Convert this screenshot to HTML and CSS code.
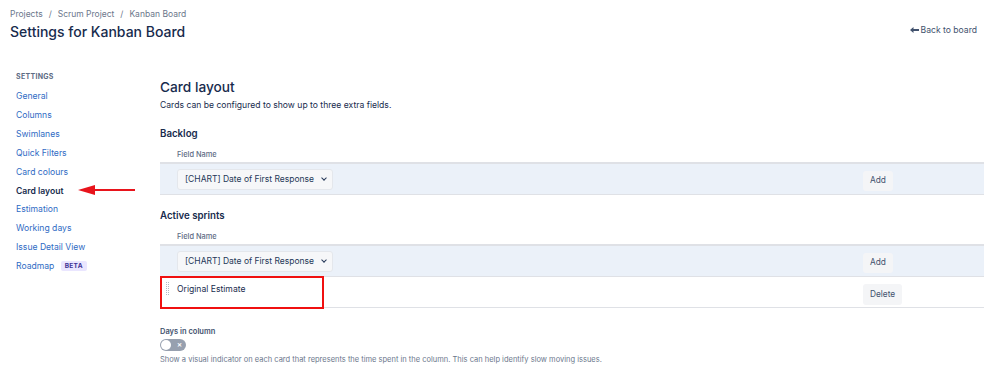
FILE: index.html
```html
<!DOCTYPE html>
<html lang="en">
<head>
    <meta charset="UTF-8">
    <meta name="viewport" content="width=device-width, initial-scale=1.0">
    <title>Settings for Kanban Board</title>
    <link rel="stylesheet" href="styles.css">
</head>
<body>
    <div class="page-header">
        <div>
            <div class="breadcrumbs">
                <a href="#">Projects</a><span class="sep">/</span><a href="#">Scrum Project</a><span class="sep">/</span><a href="#">Kanban Board</a>
            </div>
            <h1>Settings for Kanban Board</h1>
        </div>
        <a class="back-link" href="#">
            <svg class="back-arrow" width="9" height="6" viewBox="0 0 9 6"><path d="M0 3 L3.5 0 L3.5 2 L9 2 L9 4 L3.5 4 L3.5 6 Z" fill="#42526e"/></svg>Back to board
        </a>
    </div>

    <div class="layout">
        <!-- sidebar -->
        <div class="sidebar">
            <div class="sidebar-title">Settings</div>
            <a href="#" class="nav-item">General</a>
            <a href="#" class="nav-item">Columns</a>
            <a href="#" class="nav-item">Swimlanes</a>
            <a href="#" class="nav-item">Quick Filters</a>
            <a href="#" class="nav-item">Card colours</a>
            <a href="#" class="nav-item active">Card layout</a>
            <a href="#" class="nav-item">Estimation</a>
            <a href="#" class="nav-item">Working days</a>
            <a href="#" class="nav-item">Issue Detail View</a>
            <a href="#" class="nav-item">Roadmap <span class="lozenge">Beta</span></a>
            <div class="red-arrow"></div>
        </div>

        <!-- main -->
        <div class="main">
            <h2>Card layout</h2>
            <p class="intro">Cards can be configured to show up to three extra fields.</p>

            <h3>Backlog</h3>
            <div class="field-table">
                <div class="table-head">Field Name</div>
                <div class="table-row add-row">
                    <div class="cell-field">
                        <div class="select">[CHART] Date of First Response<span class="chevron"></span></div>
                    </div>
                    <div class="cell-actions"><button>Add</button></div>
                </div>
            </div>

            <h3 class="sprints-title">Active sprints</h3>
            <div class="field-table">
                <div class="table-head">Field Name</div>
                <div class="table-row add-row">
                    <div class="cell-field">
                        <div class="select">[CHART] Date of First Response<span class="chevron"></span></div>
                    </div>
                    <div class="cell-actions"><button>Add</button></div>
                </div>
                <div class="table-row field-row">
                    <div class="cell-field">
                        <span class="grip"></span>Original Estimate
                    </div>
                    <div class="cell-actions"><button>Delete</button></div>
                    <div class="highlight-box"></div>
                </div>
            </div>

            <div class="days-label">Days in column</div>
            <div class="toggle"><span class="knob"></span><span class="toggle-x">&#x2715;</span></div>
            <p class="help">Show a visual indicator on each card that represents the time spent in the column. This can help identify slow moving issues.</p>
        </div>
    </div>
</body>
</html>
```

FILE: styles.css
```css
body {
    margin: 0;
    font-family: 'Inter', 'Liberation Sans', sans-serif;
    color: #172b4d;
    background: #fff;
}
a {
    text-decoration: none;
}
.page-header {
    display: flex;
    justify-content: space-between;
    align-items: flex-end;
    padding: 6px 22px 0 10px;
}
.breadcrumbs {
    font-size: 8.5px;
    line-height: 16px;
    color: #6b778c;
}
.breadcrumbs a {
    color: #6b778c;
}
.breadcrumbs .sep {
    margin: 0 6px;
}
h1 {
    margin: 0;
    font-size: 14px;
    line-height: 20px;
    font-weight: 500;
}
.back-link {
    display: flex;
    align-items: center;
    font-size: 8.6px;
    line-height: 16px;
    color: #42526e;
    margin-bottom: 4px;
}
.back-arrow {
    margin-right: 2px;
}
.layout {
    display: flex;
    padding-top: 35px;
}
.sidebar {
    position: relative;
    width: 160px;
    padding-left: 16px;
    box-sizing: border-box;
    margin-top: -6px;
    flex-shrink: 0;
}
.sidebar-title {
    font-size: 7px;
    line-height: 12px;
    font-weight: 700;
    text-transform: uppercase;
    letter-spacing: 0.3px;
    color: #5e6c84;
    margin-bottom: 4px;
}
.nav-item {
    display: block;
    font-size: 8.6px;
    line-height: 18.9px;
    color: #2f6bc4;
}
.nav-item.active {
    color: #172b4d;
    font-weight: 600;
}
.lozenge {
    display: inline-block;
    margin-left: 4px;
    padding: 0 4px;
    background: #eae6ff;
    color: #403294;
    font-size: 6.5px;
    font-weight: 700;
    line-height: 10px;
    border-radius: 2px;
    text-transform: uppercase;
    letter-spacing: 0.3px;
    vertical-align: 1px;
}
.red-arrow {
    position: absolute;
    left: 78px;
    top: 114px;
    width: 57px;
    height: 10px;
}
.red-arrow::before {
    content: '';
    position: absolute;
    left: 0;
    top: 0;
    border-top: 5px solid transparent;
    border-bottom: 5px solid transparent;
    border-right: 17px solid #e8141c;
}
.red-arrow::after {
    content: '';
    position: absolute;
    left: 15px;
    right: 0;
    top: 4px;
    height: 2px;
    background: #e8141c;
}
.main {
    flex: 1;
    margin-right: 15px;
}
h2 {
    margin: 0;
    font-size: 13.7px;
    line-height: 20px;
    font-weight: 500;
}
.intro {
    margin: 1px 0 0;
    font-size: 8.6px;
    line-height: 14px;
}
h3 {
    margin: 14px 0 0;
    font-size: 9.7px;
    line-height: 16px;
    font-weight: 600;
}
h3.sprints-title {
    margin-top: 13px;
}
.field-table {
    margin-top: 7px;
}
.table-head {
    font-size: 7.4px;
    line-height: 12px;
    color: #5e6c84;
    font-weight: 500;
    padding: 0 0 1px 17px;
    border-bottom: 2px solid #dfe1e6;
}
.table-row {
    position: relative;
    display: flex;
    border-bottom: 1px solid #dfe1e6;
}
.add-row {
    background: #ebf1f9;
    height: 30px;
    align-items: center;
}
.field-row {
    height: 30px;
    align-items: flex-start;
}
.cell-field {
    flex: 1;
    display: flex;
    align-items: center;
    padding-left: 17px;
    font-size: 8.6px;
}
.cell-actions {
    width: 121px;
}
.select {
    display: flex;
    align-items: center;
    justify-content: space-between;
    width: 156px;
    height: 21px;
    box-sizing: border-box;
    padding: 0 6px 0 7px;
    background: #f6f7f9;
    border: 1px solid #e4e7ec;
    border-radius: 3px;
    font-size: 8.5px;
    white-space: nowrap;
    color: #253858;
}
.chevron {
    width: 3px;
    height: 3px;
    border-right: 1.5px solid #253858;
    border-bottom: 1.5px solid #253858;
    transform: rotate(45deg);
    margin: -3px 0 0 0;
}
button {
    font-family: inherit;
    font-size: 8.3px;
    line-height: 12px;
    color: #42526e;
    background: #f4f5f7;
    border: none;
    border-radius: 3px;
    height: 20px;
    padding: 0 7px 1px;
}
.field-row .cell-field {
    padding-top: 5px;
    line-height: 14px;
    position: relative;
}
.field-row .cell-actions {
    padding-top: 4px;
}
.field-row button {
    height: 21px;
}
.grip {
    position: absolute;
    left: 6px;
    top: 5px;
    width: 4px;
    height: 14px;
    background-image:
        repeating-linear-gradient(to bottom, transparent 0 1px, #fff 1px 2px),
        repeating-linear-gradient(to right, #b3bac5 0 1px, transparent 1px 2px);
}
.highlight-box {
    position: absolute;
    left: 0;
    top: -1px;
    width: 164px;
    height: 33px;
    box-sizing: border-box;
    border: 2px solid #f01010;
}
.days-label {
    margin-top: 18px;
    font-size: 7.5px;
    line-height: 12px;
    font-weight: 600;
    color: #42526e;
}
.toggle {
    position: relative;
    width: 26px;
    height: 12px;
    margin-top: 1px;
    border-radius: 6px;
    background: #97a0af;
}
.knob {
    position: absolute;
    left: 1px;
    top: 1px;
    width: 10px;
    height: 10px;
    border-radius: 50%;
    background: #fff;
}
.toggle-x {
    position: absolute;
    right: 4px;
    top: 0;
    font-size: 6px;
    line-height: 12px;
    font-weight: bold;
    color: #fff;
}
.help {
    margin: 3px 0 0;
    font-size: 7.5px;
    line-height: 12px;
    color: #6b778c;
}
```
